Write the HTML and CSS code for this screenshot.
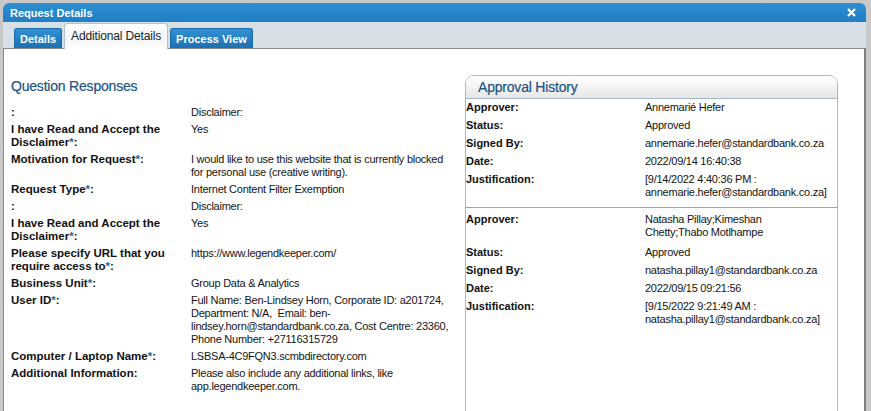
FILE: index.html
```html
<!DOCTYPE html>
<html>
<head>
<meta charset="utf-8">
<link rel="stylesheet" href="styles.css">
</head>
<body>
<div class="dialog">
  <div class="titlebar">
    <span class="title">Request Details</span>
    <span class="close"><svg width="9" height="9" viewBox="0 0 9 9"><path d="M1 1 L8 8 M8 1 L1 8" stroke="#fff" stroke-width="2.2" fill="none"/></svg></span>
  </div>
  <div class="tabs">
    <div class="tab">Details</div>
    <div class="tab active">Additional Details</div>
    <div class="tab">Process View</div>
  </div>
  <div class="content">
    <section class="responses">
      <h2 class="heading">Question Responses</h2>
      <table class="qa">
        <tr><td class="lbl">:</td><td class="val">Disclaimer:</td></tr>
        <tr><td class="lbl">I have Read and Accept the<br>Disclaimer<span class="req">*</span>:</td><td class="val">Yes</td></tr>
        <tr><td class="lbl">Motivation for Request<span class="req">*</span>:</td><td class="val">I would like to use this website that is currently blocked<br>for personal use (creative writing).</td></tr>
        <tr><td class="lbl">Request Type<span class="req">*</span>:</td><td class="val">Internet Content Filter Exemption</td></tr>
        <tr><td class="lbl">:</td><td class="val">Disclaimer:</td></tr>
        <tr><td class="lbl">I have Read and Accept the<br>Disclaimer<span class="req">*</span>:</td><td class="val">Yes</td></tr>
        <tr><td class="lbl">Please specify URL that you<br>require access to<span class="req">*</span>:</td><td class="val">https://www.legendkeeper.com/</td></tr>
        <tr><td class="lbl">Business Unit<span class="req">*</span>:</td><td class="val">Group Data &amp; Analytics</td></tr>
        <tr><td class="lbl">User ID<span class="req">*</span>:</td><td class="val">Full Name: Ben-Lindsey Horn, Corporate ID: a201724,<br>Department: N/A,&nbsp; Email: ben-<br>lindsey.horn@standardbank.co.za, Cost Centre: 23360,<br>Phone Number: +27116315729</td></tr>
        <tr><td class="lbl">Computer / Laptop Name<span class="req">*</span>:</td><td class="val">LSBSA-4C9FQN3.scmbdirectory.com</td></tr>
        <tr><td class="lbl">Additional Information:</td><td class="val">Please also include any additional links, like<br>app.legendkeeper.com.</td></tr>
      </table>
    </section>
    <section class="history">
      <div class="history-head">Approval History</div>
      <div class="approval">
        <table class="ap">
          <tr><td class="albl">Approver:</td><td class="aval">Annemarié Hefer</td></tr>
          <tr><td class="albl">Status:</td><td class="aval">Approved</td></tr>
          <tr><td class="albl">Signed By:</td><td class="aval">annemarie.hefer@standardbank.co.za</td></tr>
          <tr><td class="albl">Date:</td><td class="aval">2022/09/14 16:40:38</td></tr>
          <tr><td class="albl">Justification:</td><td class="aval">[9/14/2022 4:40:36 PM :<br>annemarie.hefer@standardbank.co.za]</td></tr>
        </table>
      </div>
      <div class="approval last">
        <table class="ap">
          <tr class="multi"><td class="albl">Approver:</td><td class="aval">Natasha Pillay;Kimeshan<br>Chetty;Thabo Motlhampe</td></tr>
          <tr><td class="albl">Status:</td><td class="aval">Approved</td></tr>
          <tr><td class="albl">Signed By:</td><td class="aval">natasha.pillay1@standardbank.co.za</td></tr>
          <tr><td class="albl">Date:</td><td class="aval">2022/09/15 09:21:56</td></tr>
          <tr><td class="albl">Justification:</td><td class="aval">[9/15/2022 9:21:49 AM :<br>natasha.pillay1@standardbank.co.za]</td></tr>
        </table>
      </div>
    </section>
  </div>
</div>
</body>
</html>
```
FILE: styles.css
```css
html, body {
  margin: 0;
  height: 411px;
  overflow: hidden;
}
body {
  background: #c8c8c8;
  padding: 3px 0 0 3px;
  box-sizing: border-box;
  font-family: "Liberation Sans", Arial, sans-serif;
  color: #111;
}
.dialog {
  width: 863px;
  height: 408px;
  display: flex;
  flex-direction: column;
  background: #d6e0e6;
  border-radius: 6px 6px 0 0;
  overflow: hidden;
}
.titlebar {
  height: 19px;
  flex: none;
  background: linear-gradient(#2d8fd2, #1f7ec4);
  display: flex;
  align-items: center;
  justify-content: space-between;
  padding: 0 10px 0 7px;
}
.title {
  color: #fff;
  font-weight: bold;
  font-size: 11px;
}
.close {
  display: flex;
  width: 9px;
  height: 9px;
}
.tabs {
  height: 26px;
  flex: none;
  display: flex;
  align-items: flex-end;
  gap: 2px;
  padding-left: 11px;
}
.tab {
  height: 20px;
  box-sizing: border-box;
  padding: 0 5px;
  display: flex;
  align-items: center;
  font-size: 11px;
  font-weight: bold;
  color: #fff;
  background: linear-gradient(#3291d4, #1c70b2);
  border: 1px solid #1b6aa8;
  border-bottom: none;
  border-radius: 3px 3px 0 0;
}
.tab.active {
  height: 26px;
  margin-bottom: -1px;
  position: relative;
  z-index: 1;
  padding: 0 6px 2px;
  font-weight: normal;
  font-size: 12px;
  letter-spacing: -0.15px;
  color: #222;
  background: linear-gradient(#ffffff, #f4f6f7 60%, #ffffff);
  border: 1px solid #b3c2cc;
  border-bottom: none;
  border-radius: 4px 4px 0 0;
}
.content {
  flex: 1;
  background: #fff;
  border: 1px solid #8a8a8a;
  border-right: 2px solid #7e7e7e;
  border-bottom: none;
  display: flex;
  align-items: flex-start;
  padding: 26px 0 0 7px;
}
.responses {
  width: 444px;
  margin-right: 10px;
  flex: none;
}
.heading {
  margin: 1px 0 8px;
  font-size: 14px;
  line-height: 20px;
  font-weight: normal;
  letter-spacing: -0.2px;
  color: #1b5283;
  -webkit-text-stroke: 0.2px #1b5283;
}
.qa, .ap {
  border-collapse: collapse;
}
.qa td, .ap td {
  vertical-align: top;
  line-height: 13px;
}
.qa td {
  padding: 2px 0;
}
.lbl {
  width: 180px;
  font-weight: bold;
  font-size: 11.5px;
  white-space: nowrap;
}
.req {
  color: #2b5f9e;
}
.val, .aval {
  font-size: 11px;
  letter-spacing: -0.25px;
  color: #141414;
  white-space: nowrap;
}
.history {
  width: 373px;
  flex: none;
  box-sizing: border-box;
  border: 1px solid #a8bac8;
  border-radius: 9px 9px 0 0;
  height: 340px;
}
.history-head {
  height: 22px;
  line-height: 22px;
  padding-left: 12px;
  border-bottom: 1px solid #a8bac8;
  border-radius: 8px 8px 0 0;
  background: linear-gradient(#ffffff, #f1f1f1 60%, #e6e6e6);
  font-size: 14px;
  letter-spacing: -0.2px;
  color: #1b5283;
  -webkit-text-stroke: 0.2px #1b5283;
}
.approval {
  padding: 0 0 5px;
  border-bottom: 1px solid #a3a3a3;
}
.approval.last {
  padding-top: 3px;
  border-bottom: none;
}
.ap td {
  padding: 2px 0 3px;
}
.ap tr.multi td {
  padding-bottom: 5px;
}
.albl {
  width: 179px;
  font-weight: bold;
  font-size: 11px;
}
```
